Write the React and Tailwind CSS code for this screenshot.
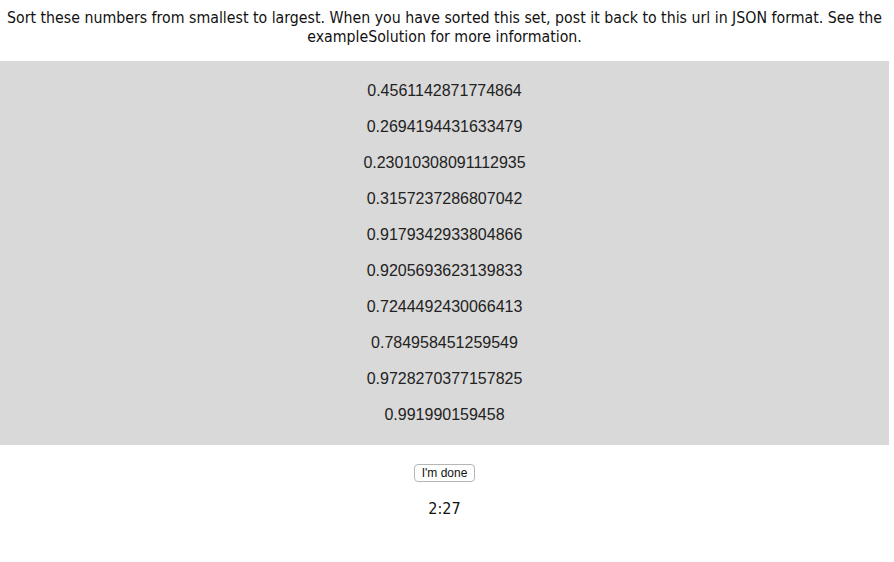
import React from 'react';

const numbers = [
  '0.4561142871774864',
  '0.2694194431633479',
  '0.23010308091112935',
  '0.3157237286807042',
  '0.9179342933804866',
  '0.9205693623139833',
  '0.7244492430066413',
  '0.784958451259549',
  '0.9728270377157825',
  '0.991990159458',
];

const App = () => {
  return (
    <div className="w-[889px] bg-white text-center text-black">
      <p className="pt-[8px] text-[15.75px] leading-[19px] text-[#111] font-['DejaVu_Sans_Condensed','DejaVu_Sans',sans-serif]">
        Sort these numbers from smallest to largest. When you have sorted this set, post it back to this url in JSON format. See the exampleSolution for more information.
      </p>

      <div className="mt-[15px] bg-[#d9d9d9] py-[12px] font-['Liberation_Sans',Arial,sans-serif]">
        {numbers.map(n => (
          <div key={n} className="h-[36px] flex items-center justify-center text-[16px] text-[#222]">{n}</div>
        ))}
      </div>

      <div className="pt-[19px] flex justify-center">
        <button className="h-[18px] px-[7px] rounded-[4px] border border-[#b5b5b5] bg-white text-[12px] leading-none text-[#111] font-['Liberation_Sans',Arial,sans-serif]">
          I'm done
        </button>
      </div>

      <div className="pt-[15px] text-[16px] text-[#111] font-['DejaVu_Sans_Condensed','DejaVu_Sans',sans-serif]">2:27</div>
    </div>
  );
};

export default App;
